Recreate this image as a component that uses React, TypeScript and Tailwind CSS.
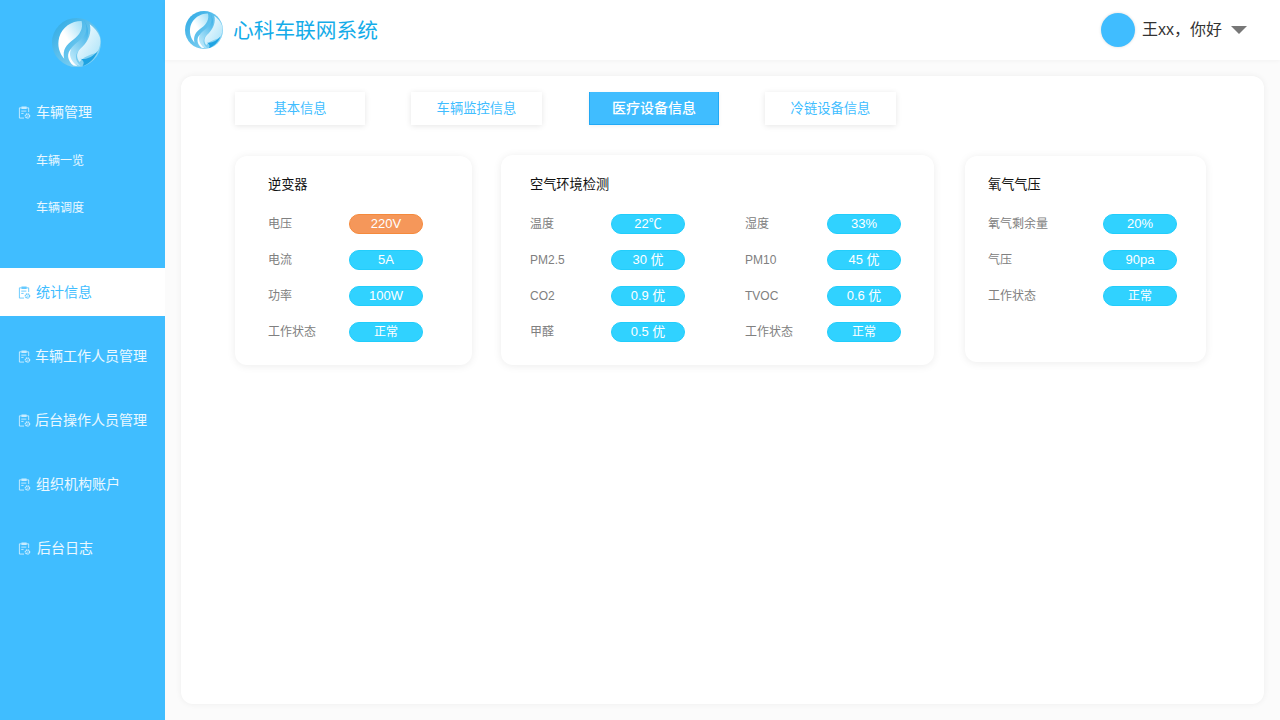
import type { ReactNode } from "react";

const FONT = "font-['Liberation_Sans','Noto_Sans_CJK_SC',sans-serif]";

function Logo({ id, className }: { id: string; className: string }) {
  return (
    <svg viewBox="0 0 48 48" className={className}>
      <defs>
        <linearGradient id={`${id}-a`} x1="0" y1="0" x2="1" y2="1">
          <stop offset="0" stopColor="#2aa8e4" />
          <stop offset="1" stopColor="#9adcf6" />
        </linearGradient>
        <linearGradient id={`${id}-b`} x1="1" y1="0" x2="0" y2="1">
          <stop offset="0" stopColor="#9fdff8" />
          <stop offset="0.55" stopColor="#ffffff" />
          <stop offset="1" stopColor="#ffffff" />
        </linearGradient>
        <linearGradient id={`${id}-c`} x1="0" y1="0" x2="1" y2="1">
          <stop offset="0" stopColor="#ffffff" />
          <stop offset="1" stopColor="#a8e2f9" />
        </linearGradient>
        <linearGradient id={`${id}-d`} x1="0.8" y1="0" x2="0.2" y2="1">
          <stop offset="0" stopColor="#35aee8" />
          <stop offset="1" stopColor="#c4ecfb" />
        </linearGradient>
      </defs>
      <circle cx="24" cy="24" r="24" fill={`url(#${id}-a)`} />
      {/* white swoosh, top centre to lower left */}
      <path d="M29 3C19 3 10 9 7 19C5 27 7 34 12 40C10 31 14 26 21 21C27 17 31 10 29 3Z" fill={`url(#${id}-b)`} />
      {/* blue channel of the S */}
      <path d="M31 2C36 9 34 17 27 22C20 27 15 32 17 40C19 44 23 46 28 47C22 41 22 35 28 30C35 24 39 13 31 2Z" fill={`url(#${id}-d)`} />
      {/* right swoosh */}
      <path d="M37 6C39 14 36 22 30 28C24 33 23 38 27 43C31 38 37 36 44 34C47 29 48 24 47 19C45 13 41 9 37 6Z" fill={`url(#${id}-c)`} />
      {/* thin white line under the channel */}
      <path d="M19 30C16 35 18 42 25 47L21 46.5C15 42 14 34 19 30Z" fill="#ffffff" />
      {/* dark edge, lower right */}
      <path d="M28 40C34 41 40 38 45 32C42 40 36 45 30 47C32 44 31 42 28 40Z" fill="#1fa3e2" />
    </svg>
  );
}

function ClipIcon({ className }: { className: string }) {
  return (
    <svg viewBox="0 0 14 15" fill="none" stroke="currentColor" strokeWidth="1" className={className}>
      <path d="M3.5 2.5H1.5V13.5H6.5" />
      <path d="M9.5 2.5H11.5V7" />
      <rect x="3.5" y="1" width="6" height="2.6" rx="0.6" fill="currentColor" stroke="none" />
      <path d="M3.5 6H9M3.5 8.5H6" />
      <circle cx="10.2" cy="11.2" r="2.2" strokeWidth="1.6" strokeDasharray="1.4 0.5" />
      <circle cx="10.2" cy="11.2" r="0.6" fill="currentColor" stroke="none" />
    </svg>
  );
}

function NavItem({ label, gap, active }: { label: string; gap: string; active?: boolean }) {
  return (
    <div
      className={`flex h-12 items-center pl-[18px] text-sm ${gap} ${
        active ? "bg-white text-[#40bdff]" : "text-white/90"
      }`}
    >
      <ClipIcon className="h-[15px] w-[13px] shrink-0 opacity-80" />
      <span>{label}</span>
    </div>
  );
}

function Pill({ value, warn }: { value: string; warn?: boolean }) {
  return (
    <div
      className={`flex h-5 w-[74px] items-center justify-center rounded-full border text-white ${
        value === "正常" ? "text-xs" : "text-[13px]"
      } ${warn ? "border-[#f58a3c] bg-[#f5975a]" : "border-[#22cdfb] bg-[#30d2ff]"}`}
    >
      {value}
    </div>
  );
}

function Row({ label, value, labelW, warn }: { label: string; value: string; labelW: string; warn?: boolean }) {
  return (
    <div className="flex h-5 items-center">
      <span className={`${labelW} text-xs text-[#808080]`}>{label}</span>
      <Pill value={value} warn={warn} />
    </div>
  );
}

function Card({ title, className, children }: { title: string; className: string; children: ReactNode }) {
  return (
    <div className={`rounded-xl bg-white shadow-[0_1px_8px_rgba(0,0,0,0.08)] ${className}`}>
      <h3 className="flex h-5 items-center pt-0.5 text-[13.2px] font-normal text-[#111]">{title}</h3>
      {children}
    </div>
  );
}

const TABS = [
  { label: "基本信息", w: "w-[130px]" },
  { label: "车辆监控信息", w: "w-[131px]" },
  { label: "医疗设备信息", w: "ml-px w-[130px]", active: true },
  { label: "冷链设备信息", w: "w-[131px]" },
];

const AIR = [
  ["温度", "22℃", "湿度", "33%"],
  ["PM2.5", "30 优", "PM10", "45 优"],
  ["CO2", "0.9 优", "TVOC", "0.6 优"],
  ["甲醛", "0.5 优", "工作状态", "正常"],
];

export default function App() {
  return (
    <div className={`flex h-[720px] w-[1280px] overflow-hidden bg-[#fbfbfb] ${FONT}`}>
      <aside className="flex w-[165px] shrink-0 flex-col bg-[#40bdff]">
        <div className="h-[88px] pl-[52px] pt-[18px]">
          <Logo id="side" className="h-[49px] w-[49px]" />
        </div>
        <NavItem label="车辆管理" gap="gap-[5px]" />
        <div className="flex h-12 items-center pl-9 pt-px text-xs text-white/90">车辆一览</div>
        <div className="flex h-[46px] items-center pl-9 pt-px text-xs text-white/90">车辆调度</div>
        <div className="mt-[38px] flex flex-col gap-4">
          <NavItem label="统计信息" gap="gap-[5px]" active />
          <NavItem label="车辆工作人员管理" gap="gap-1" />
          <NavItem label="后台操作人员管理" gap="gap-1" />
          <NavItem label="组织机构账户" gap="gap-[5px]" />
          <NavItem label="后台日志" gap="gap-[6px]" />
        </div>
      </aside>

      <div className="flex min-w-0 flex-1 flex-col">
        <header className="flex h-[60px] items-center bg-white pl-5 pr-[33px] shadow-[0_1px_4px_rgba(0,0,0,0.04)]">
          <Logo id="head" className="h-[38px] w-[38px]" />
          <span className="ml-[10px] pt-px text-[20.7px] text-[#14ace9]">心科车联网系统</span>
          <div className="ml-auto flex items-center">
            <div className="h-[34px] w-[34px] rounded-full bg-[#40bdff] shadow-[0_0_3px_rgba(0,0,0,0.15)]" />
            <span className="ml-[7px] text-base text-[#333]">王xx，你好</span>
            <div className="ml-[9px] h-0 w-0 border-x-8 border-t-8 border-x-transparent border-t-[#777]" />
          </div>
        </header>

        <main className="ml-4 mr-4 mt-4 h-[628px] rounded-xl bg-white pl-[54px] pt-4 shadow-[0_0_6px_rgba(0,0,0,0.06)]">
          <div className="flex gap-[46px]">
            {TABS.map((tab) => (
              <div
                key={tab.label}
                className={`flex h-[33px] items-center justify-center ${tab.w} ${
                  tab.active
                    ? "border-x border-b border-[#22a9f5] bg-[#40bdff] text-sm font-medium text-white shadow-[0_1px_4px_rgba(0,0,0,0.06)]"
                    : "bg-white text-[13.3px] text-[#40bdff] shadow-[0_1px_6px_rgba(0,0,0,0.1)]"
                }`}
              >
                {tab.label}
              </div>
            ))}
          </div>

          <div className="mt-[30px] flex items-start">
            <Card title="逆变器" className="mt-px h-[209px] w-[237px] pl-[33px] pt-[18px]">
              <div className="mt-[20px] flex flex-col gap-4">
                <Row label="电压" value="220V" labelW="w-[81px]" warn />
                <Row label="电流" value="5A" labelW="w-[81px]" />
                <Row label="功率" value="100W" labelW="w-[81px]" />
                <Row label="工作状态" value="正常" labelW="w-[81px]" />
              </div>
            </Card>

            <Card title="空气环境检测" className="ml-[29px] h-[210px] w-[433px] pl-[29px] pt-[19px]">
              <div className="mt-[20px] flex flex-col gap-4">
                {AIR.map((r) => (
                  <div key={r[0]} className="flex">
                    <Row label={r[0]} value={r[1]} labelW="w-[81px]" />
                    <div className="ml-[60px]">
                      <Row label={r[2]} value={r[3]} labelW="w-[82px]" />
                    </div>
                  </div>
                ))}
              </div>
            </Card>

            <Card title="氧气气压" className="ml-[31px] mt-px h-[206px] w-[241px] pl-[23px] pt-[18px]">
              <div className="mt-[20px] flex flex-col gap-4">
                <Row label="氧气剩余量" value="20%" labelW="w-[115px]" />
                <Row label="气压" value="90pa" labelW="w-[115px]" />
                <Row label="工作状态" value="正常" labelW="w-[115px]" />
              </div>
            </Card>
          </div>
        </main>
      </div>
    </div>
  );
}
